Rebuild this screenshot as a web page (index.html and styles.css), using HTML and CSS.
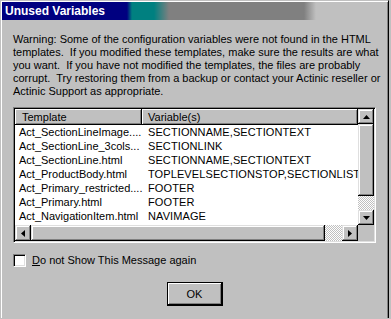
FILE: index.html
```html
<!DOCTYPE html>
<html lang="en">
<head>
    <meta charset="UTF-8">
    <title>Unused Variables</title>
    <link rel="stylesheet" href="styles.css">
</head>
<body>
    <div class="window">
        <div class="titlebar"><span class="title">Unused Variables</span></div>
        <div class="content">
            <p class="message">
                <span class="line">Warning: Some of the configuration variables were not found in the HTML</span>
                <span class="line">templates.&nbsp; If you modified these templates, make sure the results are what</span>
                <span class="line">you want.&nbsp; If you have not modified the templates, the files are probably</span>
                <span class="line">corrupt.&nbsp; Try restoring them from a backup or contact your Actinic reseller or</span>
                <span class="line">Actinic Support as appropriate.</span>
            </p>

            <div class="listview">
                <div class="list-main">
                    <div class="list-header">
                        <div class="head col-template">Template</div>
                        <div class="head col-vars">Variable(s)</div>
                    </div>
                    <div class="row"><span class="cell col-template">Act_SectionLineImage....</span><span class="cell col-vars">SECTIONNAME,SECTIONTEXT</span></div>
                    <div class="row"><span class="cell col-template">Act_SectionLine_3cols...</span><span class="cell col-vars">SECTIONLINK</span></div>
                    <div class="row"><span class="cell col-template">Act_SectionLine.html</span><span class="cell col-vars">SECTIONNAME,SECTIONTEXT</span></div>
                    <div class="row"><span class="cell col-template">Act_ProductBody.html</span><span class="cell col-vars">TOPLEVELSECTIONSTOP,SECTIONLISTT</span></div>
                    <div class="row"><span class="cell col-template">Act_Primary_restricted....</span><span class="cell col-vars">FOOTER</span></div>
                    <div class="row"><span class="cell col-template">Act_Primary.html</span><span class="cell col-vars">FOOTER</span></div>
                    <div class="row"><span class="cell col-template">Act_NavigationItem.html</span><span class="cell col-vars">NAVIMAGE</span></div>
                </div>

                <div class="vscroll">
                    <div class="sbtn">
                        <svg width="7" height="4" viewBox="0 0 7 4"><polygon points="3.5,0 7,4 0,4" fill="#000"/></svg>
                    </div>
                    <div class="thumb thumb-v"></div>
                    <div class="track"></div>
                    <div class="sbtn">
                        <svg width="7" height="4" viewBox="0 0 7 4"><polygon points="0,0 7,0 3.5,4" fill="#000"/></svg>
                    </div>
                </div>

                <div class="hscroll">
                    <div class="sbtn">
                        <svg width="4" height="7" viewBox="0 0 4 7"><polygon points="4,0 4,7 0,3.5" fill="#000"/></svg>
                    </div>
                    <div class="thumb thumb-h"></div>
                    <div class="track"></div>
                    <div class="sbtn">
                        <svg width="4" height="7" viewBox="0 0 4 7"><polygon points="0,0 4,3.5 0,7" fill="#000"/></svg>
                    </div>
                </div>

                <div class="corner"></div>
            </div>

            <label class="check">
                <span class="box"></span>
                <span class="check-label"><u>D</u>o not Show This Message again</span>
            </label>

            <div class="actions">
                <button class="ok">OK</button>
            </div>
        </div>
    </div>
</body>
</html>
```

FILE: styles.css
```css
html, body {
    margin: 0;
    height: 100%;
    overflow: hidden;
}

body {
    background-color: #c0c0c0;
    font-family: 'Liberation Sans', Arial, sans-serif;
    font-size: 11px;
    color: #000;
}

/* window frame, runs on below the visible area */
.window {
    width: 385px;
    height: 315px;
    padding: 1px;
    border: 1px solid;
    border-bottom: 0;
    border-color: #c0c0c0 #000 #000 #c0c0c0;
    box-shadow: inset 1px 1px #fff, inset -1px 0 #808080;
    background-color: #c0c0c0;
}

.titlebar {
    height: 18px;
    display: flex;
    align-items: center;
    padding-left: 3px;
    background: linear-gradient(to right,
        #000080 0, #000080 125px,
        #008080 130px, #008080 152px,
        #808080 167px, #808080 302px,
        #c0c0c0 314px);
}

.title {
    color: #fff;
    font-weight: bold;
    font-size: 12px;
}

.content {
    padding: 0 11px;
}

.message {
    margin: 13px 0 0;
    line-height: 13px;
}

.line {
    display: block;
    white-space: nowrap;
}

/* list view */
.listview {
    margin-top: 9px;
    width: 359px;
    height: 132px;
    border: 1px solid;
    border-color: #808080 #fff #fff #808080;
    padding: 1px;
    box-shadow: inset 1px 1px #000, inset -1px -1px #dfdfdf;
    background-color: #fff;
    display: grid;
    grid-template-columns: 1fr 16px;
    grid-template-rows: 1fr 16px;
}

.list-main {
    overflow: hidden;
    background-color: #fff;
}

.list-header {
    display: flex;
    height: 16px;
    background-color: #c0c0c0;
}

.head {
    flex-shrink: 0;
    display: flex;
    align-items: center;
    box-sizing: border-box;
    box-shadow: inset -1px -1px #000, inset 1px 1px #fff, inset -2px -2px #808080;
}

.head.col-template {
    width: 127px;
    padding-left: 7px;
}

.head.col-vars {
    flex: 1;
    padding-left: 6px;
}

.row {
    display: flex;
    height: 14px;
    line-height: 14px;
    white-space: nowrap;
}

.cell {
    flex-shrink: 0;
    box-sizing: border-box;
}

.cell.col-template {
    width: 127px;
    padding-left: 4px;
}

.cell.col-vars {
    padding-left: 6px;
    letter-spacing: 0.1px;
}

/* scroll bars */
.vscroll,
.hscroll {
    display: flex;
}

.vscroll {
    flex-direction: column;
}

.sbtn {
    width: 16px;
    height: 16px;
    flex-shrink: 0;
    display: flex;
    align-items: center;
    justify-content: center;
    background-color: #c0c0c0;
    box-shadow: inset -1px -1px #000, inset 1px 1px #dfdfdf, inset -2px -2px #808080, inset 2px 2px #fff;
}

.vscroll .sbtn {
    height: 15px;
}

.thumb {
    flex-shrink: 0;
    background-color: #c0c0c0;
    box-shadow: inset -1px -1px #000, inset 1px 1px #dfdfdf, inset -2px -2px #808080, inset 2px 2px #fff;
}

.thumb-v {
    height: 72px;
}

.thumb-h {
    width: 294px;
}

.track {
    flex: 1;
    background: repeating-conic-gradient(#fff 0 25%, #c0c0c0 0 50%) 0 0 / 2px 2px;
}

.corner {
    background-color: #c0c0c0;
}

/* checkbox */
.check {
    margin-top: 11px;
    display: flex;
    align-items: center;
    gap: 6px;
    height: 13px;
    line-height: 13px;
}

.box {
    width: 9px;
    height: 9px;
    border: 1px solid;
    border-color: #808080 #fff #fff #808080;
    box-shadow: inset 1px 1px #000, inset -1px -1px #dfdfdf;
    padding: 1px;
    background-color: #fff;
}

/* buttons */
.actions {
    margin-top: 15px;
    display: flex;
    justify-content: center;
}

.ok {
    width: 56px;
    height: 24px;
    padding: 0;
    border: 1px solid #000;
    background-color: #c0c0c0;
    font-family: inherit;
    font-size: 11px;
    color: #000;
    box-shadow: inset -1px -1px #000, inset 1px 1px #fff, inset -2px -2px #808080;
}
```
